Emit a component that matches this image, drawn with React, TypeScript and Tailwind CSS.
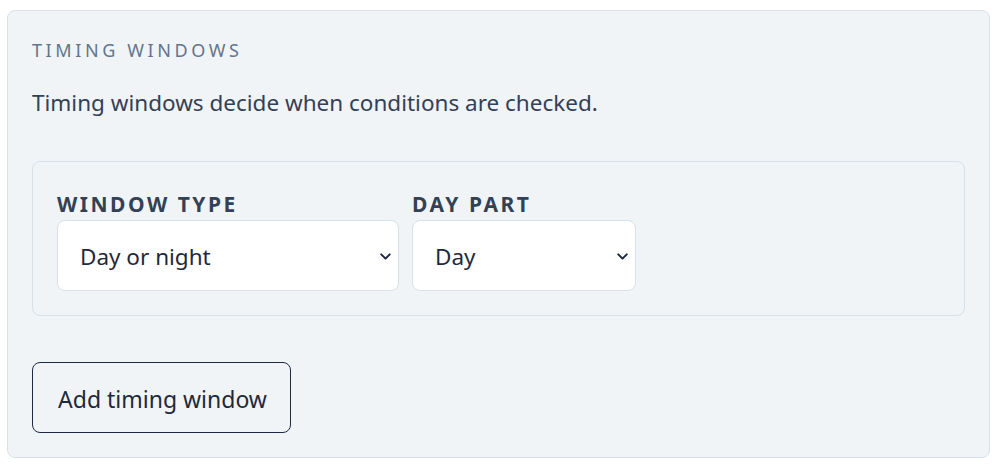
import { ChevronDown } from "lucide-react";

const font = { fontFamily: "'Noto Sans', sans-serif" };

function Select({ label, value, options, width }: { label: string; value: string; options: string[]; width: string }) {
  return (
    <div className="flex flex-col gap-[4px]">
      <div className="text-[21px] leading-[24px] font-bold tracking-[0.12em] uppercase text-[#334155]">
        {label}
      </div>
      <div className={`relative ${width}`}>
        <select
          defaultValue={value}
          className="w-full h-[71px] appearance-none rounded-[8px] border border-[#d9e0e8] bg-white pl-[22px] pt-[3px] pr-[40px] text-[22.5px] text-[#1e293b] outline-none"
          style={font}
        >
          {options.map((o) => (
            <option key={o}>{o}</option>
          ))}
        </select>
        <ChevronDown
          size={17}
          strokeWidth={2.8}
          className="pointer-events-none absolute right-[5px] top-[28px] text-[#1e293b]"
        />
      </div>
    </div>
  );
}

export default function App() {
  return (
    <div className="bg-white w-[999px] h-[468px] pt-[10px] pl-[7px]" style={font}>
      <div className="w-[983px] h-[448px] rounded-[8px] border border-[#d9e0e8] bg-[#f0f4f7] px-[24px] pt-[27px] pb-[25px]">
        {/* Header */}
        <div className="text-[18px] leading-[24px] tracking-[0.2em] uppercase text-[#64748b]">
          Timing windows
        </div>
        <p className="mt-[27px] text-[22.5px] leading-[28px] text-[#334155]">
          Timing windows decide when conditions are checked.
        </p>

        {/* Window row */}
        <div className="mt-[44px] rounded-[8px] border border-[#d9e0e8] px-[24px] pt-[30px] pb-[24px]">
          <div className="flex gap-[13px]">
            <Select label="Window type" value="Day or night" options={["Day or night", "Time range"]} width="w-[342px]" />
            <Select label="Day part" value="Day" options={["Day", "Night"]} width="w-[224px]" />
          </div>
        </div>

        <button className="mt-[46px] h-[71px] w-[259px] rounded-[8px] border border-[#1e2a44] pl-[2px] pt-[3px] text-[23px] text-[#1e293b]">
          Add timing window
        </button>
      </div>
    </div>
  );
}
